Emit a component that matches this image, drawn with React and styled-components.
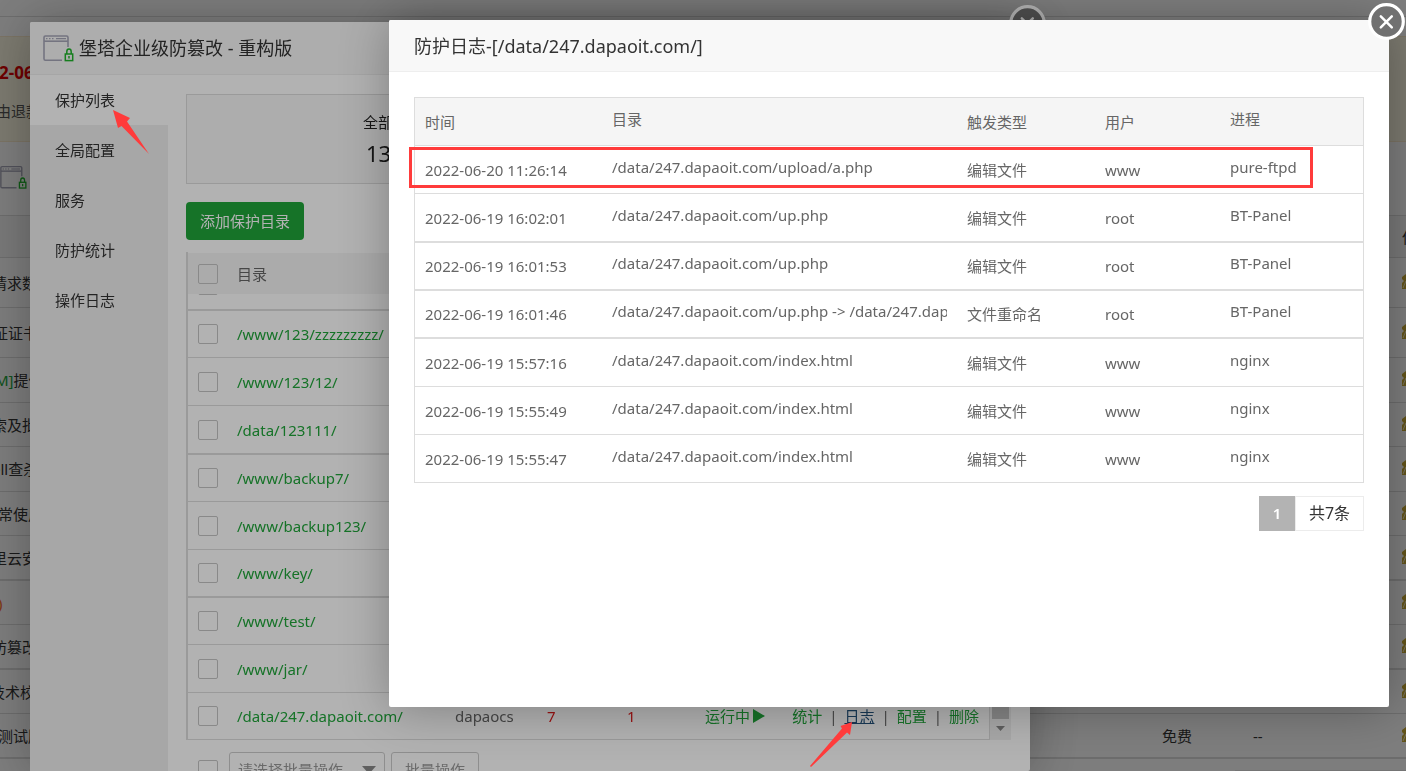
import React from "react";
import styled, { createGlobalStyle } from "styled-components";

const Global = createGlobalStyle`
  *, *::before, *::after { box-sizing: border-box; }
  html, body, #root { height: 100%; }
  body {
    margin: 0;
    overflow: hidden;
    background: #fff;
    color: #555;
    font: 15px/20px "Noto Sans", "Noto Sans CJK SC", sans-serif;
  }
  button, input, select { font: inherit; }
  table { border-collapse: separate; border-spacing: 0; table-layout: fixed; width: 100%; }
  th { font-weight: 400; text-align: left; }
  a { color: #20a53a; text-decoration: none; }
`;

const BORDER = "#ddd";

/* ---------- page behind the dialogs ---------- */

const Page = styled.main`
  display: flex;
  flex-direction: column;
  height: 100%;
  overflow: hidden;
`;

const TopBar = styled.div`
  flex: none;
  height: 17px;
  border-bottom: 1px solid ${BORDER};
  margin-bottom: 19px;
`;

const Notice = styled.section`
  flex: none;
  height: 106px;
  padding: 24px 0 0;
  background: #fcf8e3;
  border: solid #faebcc;
  border-width: 1px 0;
  white-space: nowrap;
`;

const NoticeDate = styled.strong`
  display: block;
  font-size: 17px;
  line-height: 24px;
  color: #e00000;
  text-indent: -1px;
`;

const NoticeText = styled.span`
  display: block;
  margin-top: 16px;
  text-indent: -4px;
`;

const AppStrip = styled.div`
  flex: none;
  height: 74px;
  padding-top: 22px;
  border-bottom: 1px solid ${BORDER};
`;

const PageTable = styled.table`
  flex: none;
`;

const PageCell = styled.td`
  height: ${(p) => p.$height}px;
  padding: 0;
  border-bottom: ${(p) => (p.$heavy ? 2 : 1)}px solid ${BORDER};
  background: ${(p) => (p.$head ? "#f6f6f6" : "transparent")};
  color: ${(p) => p.$color || "#333"};
  text-indent: ${(p) => p.$indent || 0}px;
  white-space: nowrap;
  overflow: hidden;
`;

const Accent = styled.span`
  color: #20a53a;
`;

const PageFooter = styled.div`
  display: flex;
  flex: none;
  justify-content: flex-end;
  margin-top: 11px;
`;

const FooterBox = styled.span`
  width: ${(p) => p.$width}px;
  height: 34px;
  border: 1px solid #ececec;
  border-right: 0;
`;

const pageRows = [
  { text: "请求数据", indent: -8, height: 50 },
  { text: "证证书", indent: -7, height: 50 },
  { accent: "M]", text: "提供", indent: -5, height: 45 },
  { text: "索及批量", indent: -8, height: 44 },
  { text: "ell查杀", indent: -8, height: 45 },
  { text: "常使用", indent: -2, height: 44 },
  { text: "里云安全", indent: -8, height: 45, heavy: true },
  { text: ")", indent: -2, height: 44, color: "#fc6d26" },
  { text: "防篡改", indent: -8, height: 45, heavy: true },
  { text: "技术校", indent: -10, height: 44 },
  { text: "测试版", indent: -2, height: 45, heavy: true, price: "免费", expiry: "--" },
];

function ShieldIcon({ size }) {
  return (
    <svg width={size} height={size} viewBox="0 0 31 27" aria-hidden="true">
      <g fill="none" stroke="#a6a6b8" strokeWidth="1.6">
        <path d="M19 25.2H2.4A1.4 1.4 0 0 1 1 23.800V2.400A1.400 1.400 0 0 1 2.400 1h21.200A1.400 1.400 0 0 1 25 2.400V12" />
        <path d="M1 6.200H25" />
        <path d="M3 3.700h1.500M6 3.700h1.500M9 3.700h1.500M13 3.700h10" strokeWidth="1.200" />
      </g>
      <g fill="none" stroke="#20b52c" strokeWidth="1.500">
        <rect x="22.300" y="19" width="7.400" height="6.600" />
        <path d="M23.800 19v-2.300a2.200 2.600 0 0 1 4.400 0V19M26 21v2.600" />
      </g>
    </svg>
  );
}

function TicketIcon() {
  return (
    <svg width="18" height="15" viewBox="0 0 18 15" aria-hidden="true">
      <path d="M0 3L4 0H18V15H0V9L2 7L0 5Z" fill="#c9ab35" />
      <path d="M1 14L4 7" stroke="#eee6c4" strokeWidth="1" />
    </svg>
  );
}

function Backdrop() {
  return (
    <Page>
      <TopBar />
      <Notice>
        <NoticeDate>2-06-30</NoticeDate>
        <NoticeText>由退款</NoticeText>
      </Notice>
      <AppStrip>
        <ShieldIcon size={27} />
      </AppStrip>
      <PageTable>
        <colgroup>
          <col />
          <col style={{ width: 91 }} />
          <col style={{ width: 149 }} />
          <col style={{ width: 4 }} />
        </colgroup>
        <thead>
          <tr>
            <PageCell as="th" $height={42} $head colSpan={3} />
            <PageCell as="th" $height={42} $head>使</PageCell>
          </tr>
        </thead>
        <tbody>
          {pageRows.map((r) => (
            <tr key={r.text}>
              <PageCell $height={r.height} $heavy={r.heavy} $indent={r.indent} $color={r.color}>
                {r.accent && <Accent>{r.accent}</Accent>}
                {r.text}
              </PageCell>
              <PageCell $height={r.height} $heavy={r.heavy}>{r.price}</PageCell>
              <PageCell $height={r.height} $heavy={r.heavy}>{r.expiry}</PageCell>
              <PageCell $height={r.height} $heavy={r.heavy}>
                <TicketIcon />
              </PageCell>
            </tr>
          ))}
        </tbody>
      </PageTable>
      <PageFooter>
        <FooterBox $width={59} />
        <FooterBox $width={75} />
        <FooterBox $width={37} />
      </PageFooter>
    </Page>
  );
}

/* ---------- dialogs ---------- */

const Shade = styled.div`
  position: fixed;
  inset: 0;
  display: flex;
  padding: ${(p) => p.$inset};
  background: rgba(0, 0, 0, 0.3);
`;

const Dialog = styled.section`
  position: relative;
  flex: 1;
  min-width: 0;
  display: flex;
  flex-direction: column;
  background: #fff;
  border-radius: 2px;
  box-shadow: 1px 1px 50px rgba(0, 0, 0, 0.3);
`;

const DialogHeader = styled.header`
  flex: none;
  display: flex;
  align-items: center;
  gap: 5px;
  height: ${(p) => p.$height}px;
  padding: 0 ${(p) => p.$pad}px;
  border-bottom: 1px solid #eee;
  border-radius: 2px 2px 0 0;
  background: #f8f8f8;
`;

const DialogTitle = styled.h2`
  margin: 0;
  font-size: ${(p) => p.$size}px;
  font-weight: 400;
  line-height: 24px;
  color: #333;
`;

const CloseButton = styled.button`
  position: absolute;
  top: -17px;
  right: -16px;
  width: 37px;
  height: 37px;
  padding: 0;
  border: 0;
  background: none;

  svg { display: block; }
`;

function Close() {
  return (
    <CloseButton aria-label="关闭">
      <svg width="37" height="37" viewBox="0 0 37 37">
        <circle cx="18.500" cy="18.500" r="16.800" fill="#717171" stroke="#fff" strokeWidth="3.200" />
        <path d="M12.800 13.300L23.800 24.300M23.800 13.300L12.800 24.300" stroke="#fff" strokeWidth="2.500" strokeLinecap="round" />
      </svg>
    </CloseButton>
  );
}

/* ---------- protection dialog ---------- */

const Split = styled.div`
  flex: 1;
  min-height: 0;
  display: flex;
  overflow: hidden;
`;

const Sidebar = styled.nav`
  flex: none;
  width: 138px;
  background: #f0f0f0;
`;

const NavItem = styled.a`
  display: block;
  height: 50px;
  padding-left: 25px;
  line-height: 50px;
  color: #333;
  background: ${(p) => (p.$active ? "#fff" : "transparent")};
`;

const Content = styled.div`
  flex: 1;
  min-width: 0;
  padding: 19px 19px 0 18px;
`;

const Summary = styled.div`
  height: 90px;
  padding: 17px 0 0 176px;
  border: 1px solid ${BORDER};
  background: #f8f8f8;
  color: #222;
`;

const SummaryLabel = styled.div`
  line-height: 20px;
`;

const SummaryValue = styled.div`
  margin-top: 6px;
  padding-left: 3px;
  font-size: 22px;
  line-height: 30px;
`;

const AddButton = styled.button`
  display: block;
  width: 118px;
  height: 38px;
  margin: 18px 0 12px;
  padding: 0;
  border: 0;
  border-radius: 4px;
  background: #20a53a;
  color: #fff;
`;

const TablePane = styled.div`
  display: flex;
  height: 488px;
`;

const TableBox = styled.div`
  flex: 1;
  min-width: 0;
  display: flex;
  flex-direction: column;
  border: solid ${BORDER};
  border-width: 0 1px 1px 2px;
`;

const HeadTable = styled.table`
  flex: none;
  background: #f5f5f5;
  border-top: 1px solid #fff;
`;

const ScrollBody = styled.div`
  flex: 1;
  min-height: 0;
  display: flex;
  flex-direction: column;
  justify-content: flex-end;
  overflow: hidden;
`;

const DirCell = styled.td`
  height: ${(p) => p.$height}px;
  padding: 0 10px;
  border-bottom: ${(p) => p.$line}px solid ${BORDER};
  color: ${(p) => p.$color || "#666"};
  text-align: ${(p) => p.$align || "left"};
  white-space: nowrap;

  a:hover { text-decoration: underline; }
`;

const Check = styled.input.attrs({ type: "checkbox" })`
  appearance: none;
  display: block;
  flex: none;
  width: 20px;
  height: 20px;
  margin: 0;
  border: 1px solid #c4c4c4;
  border-radius: 2px;
`;

const Running = styled.span`
  display: flex;
  align-items: center;
  gap: 3px;
`;

const Actions = styled.span`
  display: flex;
  justify-content: flex-end;
  gap: 7px;
`;

const LogLink = styled.a`
  color: #23527c;
  text-decoration: underline;
`;

const Scrollbar = styled.div`
  flex: none;
  display: flex;
  flex-direction: column;
  align-items: center;
  width: 21px;
  margin-top: 42px;
  background: #f1f1f1;
`;

const Thumb = styled.div`
  width: 17px;
  height: 425px;
  margin-bottom: 7px;
  background: #c1c1c1;
`;

const Batch = styled.div`
  display: flex;
  align-items: flex-start;
  gap: 6px;
  padding: 12px 0 0 12px;
`;

const BatchCheck = styled.div`
  width: 25px;
  padding-top: 8px;
`;

const BatchField = styled.div`
  position: relative;
  width: 156px;

  svg { position: absolute; right: 9px; top: 14px; }
`;

const BatchSelect = styled.select`
  appearance: none;
  display: block;
  width: 100%;
  height: 36px;
  padding: 0 8px;
  border: 1px solid #ccc;
  border-radius: 3px;
  background: transparent;
  color: #999;
`;

const BatchButton = styled.button`
  width: 88px;
  height: 36px;
  padding: 0;
  border: 1px solid #ccc;
  border-radius: 3px;
  background: transparent;
  color: #999;
`;

const dirs = [
  { path: "/www/123/zzzzzzzzz/", height: 47 },
  { path: "/www/123/12/", height: 48 },
  { path: "/data/123111/", height: 49, heavy: true },
  { path: "/www/backup7/", height: 47 },
  { path: "/www/backup123/", height: 48 },
  { path: "/www/key/", height: 48, heavy: true },
  { path: "/www/test/", height: 47 },
  { path: "/www/jar/", height: 48 },
  {
    path: "/data/247.dapaoit.com/",
    height: 46,
    last: true,
    user: "dapaocs",
    blocked: "7",
    today: "1",
  },
];

function DirColumns() {
  return (
    <colgroup>
      <col style={{ width: 39 }} />
      <col />
      <col style={{ width: 92 }} />
      <col style={{ width: 80 }} />
      <col style={{ width: 78 }} />
      <col style={{ width: 88 }} />
      <col style={{ width: 206 }} />
    </colgroup>
  );
}

function DirRow({ row }) {
  const cell = { $height: row.height, $line: row.last ? 0 : row.heavy ? 2 : 1 };
  return (
    <tr>
      <DirCell {...cell}>
        <Check aria-label={row.path} />
      </DirCell>
      <DirCell {...cell}>
        <a href="#dir">{row.path}</a>
      </DirCell>
      <DirCell {...cell}>{row.user}</DirCell>
      <DirCell {...cell} $color="#e01b1b">{row.blocked}</DirCell>
      <DirCell {...cell} $color="#e01b1b">{row.today}</DirCell>
      <DirCell {...cell} $color="#20a53a">
        {row.last && (
          <Running>
            运行中
            <svg width="12" height="14" viewBox="0 0 12 14" aria-hidden="true">
              <path d="M0 0L12 7L0 14Z" fill="#20a53a" />
            </svg>
          </Running>
        )}
      </DirCell>
      <DirCell {...cell}>
        {row.last && (
          <Actions>
            <a href="#stats">统计</a>|<LogLink href="#log">日志</LogLink>|
            <a href="#config">配置</a>|<a href="#delete">删除</a>
          </Actions>
        )}
      </DirCell>
    </tr>
  );
}

function ProtectionDialog() {
  return (
    <Shade $inset="22px 376px 0 30px">
      <Dialog>
        <DialogHeader $height={53} $pad={13}>
          <ShieldIcon size={31} />
          <DialogTitle $size={18}>堡塔企业级防篡改 - 重构版</DialogTitle>
        </DialogHeader>
        <Split>
          <Sidebar>
            {["保护列表", "全局配置", "服务", "防护统计", "操作日志"].map((t, i) => (
              <NavItem key={t} href="#nav" $active={i === 0}>{t}</NavItem>
            ))}
          </Sidebar>
          <Content>
            <Summary>
              <SummaryLabel>全部</SummaryLabel>
              <SummaryValue>13</SummaryValue>
            </Summary>
            <AddButton>添加保护目录</AddButton>
            <TablePane>
              <TableBox>
                <HeadTable>
                  <DirColumns />
                  <thead>
                    <tr>
                      <DirCell as="th" $height={41} $line={0}>
                        <Check aria-label="全选" />
                      </DirCell>
                      <DirCell as="th" $height={41} $line={0} colSpan={6}>目录</DirCell>
                    </tr>
                  </thead>
                </HeadTable>
                <ScrollBody>
                  <table>
                    <DirColumns />
                    <tbody>
                      <DirRow row={{ path: "", height: 50, heavy: true }} />
                      {dirs.map((d) => (
                        <DirRow key={d.path} row={d} />
                      ))}
                    </tbody>
                  </table>
                </ScrollBody>
              </TableBox>
              <Scrollbar>
                <Thumb />
                <svg width="9" height="5" viewBox="0 0 9 5" aria-hidden="true">
                  <path d="M0 0H9L4.500 5Z" fill="#888" />
                </svg>
              </Scrollbar>
            </TablePane>
            <Batch>
              <BatchCheck>
                <Check aria-label="批量选择" />
              </BatchCheck>
              <BatchField>
                <BatchSelect aria-label="批量操作">
                  <option>请选择批量操作</option>
                </BatchSelect>
                <svg width="14" height="8" viewBox="0 0 14 8" aria-hidden="true">
                  <path d="M0 0H14L7 8Z" fill="#888" />
                </svg>
              </BatchField>
              <BatchButton>批量操作</BatchButton>
            </Batch>
          </Content>
        </Split>
        <Close />
      </Dialog>
    </Shade>
  );
}

/* ---------- log dialog ---------- */

const LogBody = styled.div`
  padding: 25px;
`;

const LogFrame = styled.div`
  position: relative;
  border: 1px solid ${BORDER};
`;

const LogCell = styled.td`
  height: ${(p) => p.$height}px;
  padding: ${(p) => (p.$raised ? "0 10px 6px" : "0 10px")};
  border-bottom: ${(p) => p.$line}px solid ${BORDER};
  background: ${(p) => (p.$head ? "#f5f5f5" : "transparent")};
  color: #666;
  white-space: nowrap;
`;

const Clip = styled.span`
  display: block;
  overflow: hidden;
`;

const Highlight = styled.div`
  position: absolute;
  top: 49px;
  left: -6px;
  right: 50px;
  height: 41px;
  border: 3px solid #ff3b3b;
  pointer-events: none;
`;

const Pager = styled.div`
  display: flex;
  justify-content: flex-end;
  margin-top: 13px;
  line-height: 32px;
`;

const PageNumber = styled.span`
  width: 36px;
  height: 35px;
  background: #b3b3b3;
  border: 1px solid #b3b3b3;
  color: #fff;
  font-weight: 600;
  text-align: center;
`;

const PageTotal = styled.span`
  width: 69px;
  height: 35px;
  border: 1px solid #ececec;
  color: #333;
  font-size: 16px;
  text-align: center;
`;

const logs = [
  { cells: ["2022-06-20 11:26:14", "/data/247.dapaoit.com/upload/a.php", "编辑文件", "www", "pure-ftpd"], line: 1, height: 48 },
  { cells: ["2022-06-19 16:02:01", "/data/247.dapaoit.com/up.php", "编辑文件", "root", "BT-Panel"], line: 2, height: 49 },
  { cells: ["2022-06-19 16:01:53", "/data/247.dapaoit.com/up.php", "编辑文件", "root", "BT-Panel"], line: 2, height: 48 },
  { cells: ["2022-06-19 16:01:46", "/data/247.dapaoit.com/up.php -> /data/247.dapa", "文件重命名", "root", "BT-Panel"], line: 2, height: 48 },
  { cells: ["2022-06-19 15:57:16", "/data/247.dapaoit.com/index.html", "编辑文件", "www", "nginx"], line: 1, height: 48 },
  { cells: ["2022-06-19 15:55:49", "/data/247.dapaoit.com/index.html", "编辑文件", "www", "nginx"], line: 1, height: 48 },
  { cells: ["2022-06-19 15:55:47", "/data/247.dapaoit.com/index.html", "编辑文件", "www", "nginx"], line: 0, height: 47 },
];

const logHeads = ["时间", "目录", "触发类型", "用户", "进程"];
const isRaised = (i) => i === 1 || i === 4;

function LogDialog() {
  return (
    <Shade $inset="20px 17px 64px 389px">
      <Dialog>
        <DialogHeader $height={52} $pad={25}>
          <DialogTitle $size={18}>防护日志-[/data/247.dapaoit.com/]</DialogTitle>
        </DialogHeader>
        <LogBody>
          <LogFrame>
            <table>
              <colgroup>
                <col style={{ width: 187 }} />
                <col />
                <col style={{ width: 138 }} />
                <col style={{ width: 125 }} />
                <col style={{ width: 143 }} />
              </colgroup>
              <thead>
                <tr>
                  {logHeads.map((h, i) => (
                    <LogCell as="th" key={h} $head $height={48} $line={1} $raised={isRaised(i)}>{h}</LogCell>
                  ))}
                </tr>
              </thead>
              <tbody>
                {logs.map((row) => (
                  <tr key={row.cells[0]}>
                    {row.cells.map((text, i) => (
                      <LogCell key={i} $height={row.height} $line={row.line} $raised={isRaised(i)}>
                        <Clip>{text}</Clip>
                      </LogCell>
                    ))}
                  </tr>
                ))}
              </tbody>
            </table>
            <Highlight />
          </LogFrame>
          <Pager>
            <PageNumber>1</PageNumber>
            <PageTotal>共7条</PageTotal>
          </Pager>
        </LogBody>
        <Close />
      </Dialog>
    </Shade>
  );
}

/* ---------- pointer arrows ---------- */

const Arrow = styled.svg`
  position: fixed;
  left: ${(p) => p.$x}px;
  top: ${(p) => p.$y}px;
  fill: #ff3b3b;
  pointer-events: none;
`;

export default function App() {
  return (
    <>
      <Global />
      <Backdrop />
      <ProtectionDialog />
      <LogDialog />
      <Arrow $x={113} $y={110} width="37" height="45" viewBox="0 0 37 45">
        <path d="M0 0L17 8L14 11.500L36 44L8.500 16L5 18Z" />
      </Arrow>
      <Arrow $x={809} $y={722} width="44" height="46" viewBox="0 0 44 46">
        <path d="M43 0L41 13L38 10.500L2 45L1 44L33 6.500L31.500 4Z" />
      </Arrow>
    </>
  );
}
